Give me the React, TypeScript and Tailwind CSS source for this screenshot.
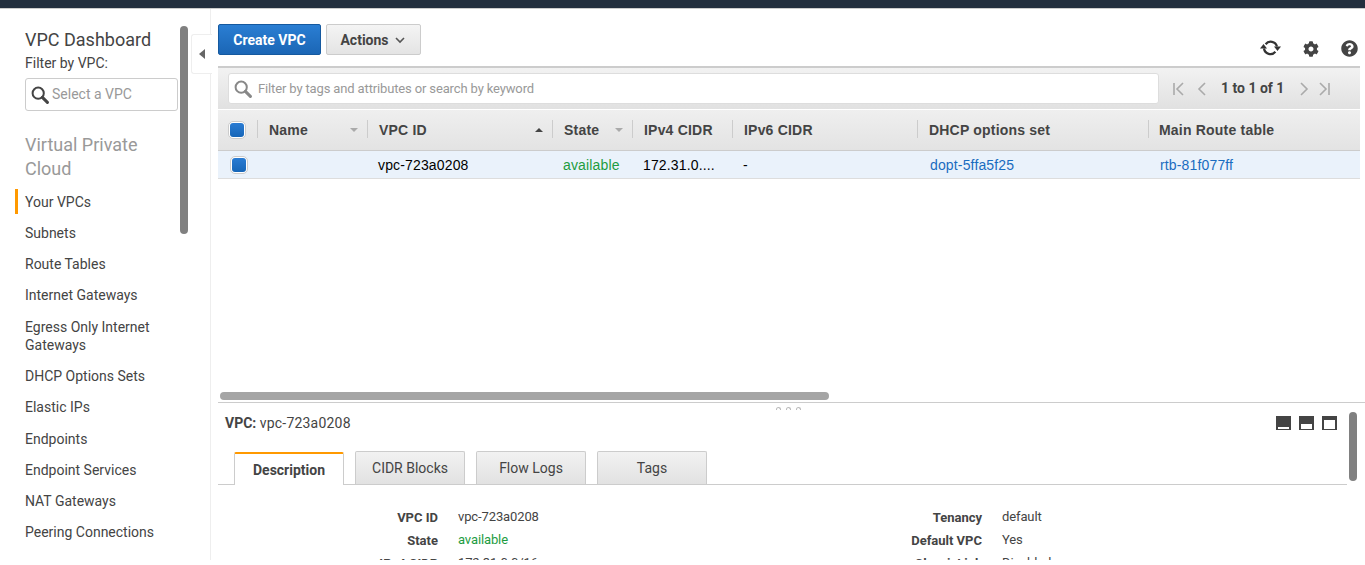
import { FaCog, FaQuestionCircle } from 'react-icons/fa';

const navItems = [
  { label: 'Your VPCs', active: true },
  { label: 'Subnets' },
  { label: 'Route Tables' },
  { label: 'Internet Gateways' },
  { label: 'Egress Only Internet Gateways' },
  { label: 'DHCP Options Sets' },
  { label: 'Elastic IPs' },
  { label: 'Endpoints' },
  { label: 'Endpoint Services' },
  { label: 'NAT Gateways' },
  { label: 'Peering Connections' },
];

const columns = [
  { label: 'Name', width: 'w-[110px]', sort: 'none', pad: 'pl-[12px]' },
  { label: 'VPC ID', width: 'w-[185px]', sort: 'up', pad: 'pl-[12px]' },
  { label: 'State', width: 'w-[80px]', sort: 'none', pad: 'pl-[12px]' },
  { label: 'IPv4 CIDR', width: 'w-[100px]', pad: 'pl-[12px]' },
  { label: 'IPv6 CIDR', width: 'w-[185px]', pad: 'pl-[12px]' },
  { label: 'DHCP options set', width: 'w-[231px]', pad: 'pl-[12px]' },
  { label: 'Main Route table', width: 'w-[212px]', pad: 'pl-[11px]' },
];

const tabs = ['CIDR Blocks', 'Flow Logs', 'Tags'];

function SearchIcon({ className }: { className: string }) {
  return (
    <svg width="18" height="18" viewBox="0 0 18 18" fill="none" stroke="currentColor" className={className} aria-hidden="true">
      <circle cx="7.2" cy="7.2" r="5.6" strokeWidth="2" />
      <path d="M11.4 11.4 16.4 16.4" strokeWidth="3" strokeLinecap="round" />
    </svg>
  );
}

function Checkbox() {
  return (
    <span className="flex h-[18px] w-[18px] items-center justify-center rounded-[5px] border border-[#ccc] bg-white">
      <span className="h-[14px] w-[14px] rounded-[3px] bg-gradient-to-b from-[#2a7cd3] to-[#1666b8]" />
    </span>
  );
}

function RefreshIcon() {
  return (
    <svg width="21" height="17" viewBox="0 0 21 17" fill="none" className="text-[#333]" aria-hidden="true">
      <path d="M5.6 4.2A6.5 6.5 0 0 1 17 6.5" stroke="currentColor" strokeWidth="2.2" />
      <path d="M15.4 11.8A6.5 6.5 0 0 1 4 8.5" stroke="currentColor" strokeWidth="2.2" />
      <path d="M14 6.5H21L17.5 11Z" fill="currentColor" />
      <path d="M0 8.5H7L3.5 4Z" fill="currentColor" />
    </svg>
  );
}

function PageIcon({ d }: { d: string }) {
  return (
    <svg width="12" height="14" viewBox="0 0 12 14" fill="none" stroke="#aaa" strokeWidth="1.6" aria-hidden="true">
      <path d={d} />
    </svg>
  );
}

function PaneIcon({ bar }: { bar: string }) {
  return (
    <span className="flex h-[14px] w-[15px] flex-col justify-end bg-[#444] px-[2px] pb-[1px]">
      <span className={`w-full bg-white ${bar}`} />
    </span>
  );
}

function DetailRow({ label, value, green }: { label: string; value: string; green?: boolean }) {
  return (
    <div className="flex h-[23px] items-center">
      <span className="w-full pt-[1px] text-right text-[13px] font-bold text-[#444]">{label}</span>
      <span className={`ml-[20px] w-[200px] shrink-0 pb-[2px] text-[13px] tracking-[-0.12px] ${green ? 'text-[#1d9c3f]' : 'text-[#444]'}`}>{value}</span>
    </div>
  );
}

export default function App() {
  return (
    <div className="h-[565px] w-[1365px] overflow-hidden bg-white font-['Roboto',sans-serif] text-[#444]">
      <div className="h-[9px] border-b border-[#ccc] bg-[#232f3e]" />

      <div className="relative flex h-[551px] overflow-hidden">
        {/* left nav */}
        <aside className="relative h-full w-[211px] shrink-0 border-r border-[#eee] pt-[18px]">
          <h2 className="ml-[25px] text-[18px] leading-[26px] text-[#444]">VPC Dashboard</h2>
          <div className="ml-[25px] text-[14px] leading-[20px]">Filter by VPC:</div>
          <div className="ml-[25px] mt-[5px] flex h-[33px] w-[153px] items-center rounded-[3px] border border-[#ccc] pl-[5px]">
            <SearchIcon className="shrink-0 text-[#444]" />
            <span className="ml-[3px] text-[14px] text-[#999]">Select a VPC</span>
          </div>
          <div className="ml-[25px] mt-[22px] w-[130px] text-[18px] leading-[24px] text-[#999]">Virtual Private Cloud</div>
          <nav className="mt-[5px]">
            {navItems.map((item) => (
              <div key={item.label} className="relative">
                {item.active && <span className="absolute left-[15px] top-[3px] h-[25px] w-[3px] bg-[#f90]" />}
                <div className="w-[160px] py-[6.65px] pl-[25px] text-[14px] leading-[18px] text-[#444]">{item.label}</div>
              </div>
            ))}
          </nav>
          <div className="absolute left-[180px] top-[17px] h-[208px] w-[8px] rounded-[4px] bg-[#808080]" />
        </aside>

        <button className="absolute left-[191px] top-[25px] flex h-[40px] w-[21px] items-center justify-center rounded-l-[3px] border border-r-0 border-[#eee] bg-white">
          <span className="border-y-[5px] border-r-[6px] border-y-transparent border-r-[#666]" />
        </button>

        {/* main */}
        <main className="relative ml-[7px] min-w-0 flex-1">
          <div className="flex h-[57px] items-start pt-[15px]">
            <button className="h-[31px] w-[103px] rounded-[2px] border border-[#15599f] bg-gradient-to-b from-[#2a7ed3] to-[#1b66b5] pt-[1px] text-[14px] font-bold text-white">
              Create VPC
            </button>
            <button className="ml-[5px] flex h-[31px] w-[95px] items-center justify-center rounded-[2px] border border-[#ccc] bg-gradient-to-b from-[#f4f4f4] to-[#e4e4e4] pr-[2px] pt-[1px] text-[14px] font-bold text-[#444]">
              Actions
              <svg width="10" height="7" viewBox="0 0 10 7" fill="none" stroke="#555" strokeWidth="1.6" className="ml-[6px]" aria-hidden="true">
                <path d="M1 1 5 5 9 1" />
              </svg>
            </button>
            <div className="ml-auto mr-[7px] mt-[16px] flex items-center">
              <RefreshIcon />
              <FaCog className="ml-[22px] text-[16px] text-[#444]" />
              <FaQuestionCircle className="ml-[22px] text-[17px] text-[#444]" />
            </div>
          </div>

          <div className="flex h-[43px] w-[1142px] items-center border-t-2 border-[#ccc] bg-gradient-to-b from-[#f2f2f2] to-[#e1e1e1] pl-[10px]">
            <div className="flex h-[31px] w-[931px] items-center rounded-[3px] border border-[#ddd] bg-white pl-[5px]">
              <SearchIcon className="shrink-0 text-[#888]" />
              <span className="ml-[6px] text-[13px] tracking-[-0.14px] text-[#999]">Filter by tags and attributes or search by keyword</span>
            </div>
            <div className="ml-[13px] flex items-center">
              <PageIcon d="M2 1V13M11 1 5 7 11 13" />
              <span className="ml-[12px]"><PageIcon d="M9 1 3 7 9 13" /></span>
              <span className="ml-[13px] mr-[14px] text-[14px] font-bold text-[#444]">1 to 1 of 1</span>
              <PageIcon d="M3 1 9 7 3 13" />
              <span className="ml-[9px]"><PageIcon d="M1 1 7 7 1 13M10 1V13" /></span>
            </div>
          </div>

          {/* table */}
          <div className="flex h-[42px] w-[1142px] items-center border-y border-[#ccc] border-t-white bg-gradient-to-b from-[#efefef] to-[#e3e3e3] font-['Liberation_Sans',sans-serif]">
            <div className="flex w-[39px] justify-center pr-[1px]"><Checkbox /></div>
            {columns.map((col) => (
              <div key={col.label} className={`relative flex h-[16px] shrink-0 items-center ${col.width} ${col.pad}`}>
                <span className="absolute left-0 top-[-2px] h-[18px] w-px bg-[#ccc]" />
                <span className="text-[14px] font-bold tracking-[0.2px] text-[#444]">{col.label}</span>
                {col.sort === 'none' && <span className="absolute right-[9px] top-[6px] border-x-[4px] border-t-[4px] border-x-transparent border-t-[#aaa]" />}
                {col.sort === 'up' && <span className="absolute right-[9px] top-[6px] border-x-[4px] border-b-[4px] border-x-transparent border-b-[#444]" />}
              </div>
            ))}
          </div>
          <div className="flex h-[28px] w-[1142px] items-center border-b border-[#ddd] bg-[#eaf2fb] pt-[1px] font-['Liberation_Sans',sans-serif] text-[14px] tracking-[0.15px]">
            <div className="-mt-[1px] flex w-[42px] shrink-0 justify-center"><Checkbox /></div>
            <div className="w-[118px] shrink-0" />
            <div className="w-[185px] shrink-0 text-black">vpc-723a0208</div>
            <div className="w-[80px] shrink-0 text-[#1d9c3f]">available</div>
            <div className="w-[100px] shrink-0 text-black">172.31.0....</div>
            <div className="w-[187px] shrink-0 text-black">-</div>
            <div className="w-[230px] shrink-0 text-[#1a6cc0]">dopt-5ffa5f25</div>
            <div className="text-[#1a6cc0]">rtb-81f077ff</div>
          </div>

          {/* horizontal scroll track */}
          <div className="flex h-[223px] items-end pb-[2px] pl-[2px]">
            <div className="h-[8px] w-[609px] rounded-[4px] bg-[#a5a5a5]" />
          </div>

          {/* detail pane */}
          <div className="border-t border-[#ccc]">
            <div className="flex h-[49px] items-start pl-[7px] pr-[28px] pt-[10px]">
              <div className="text-[14px] leading-[20px]"><b className="font-bold">VPC:</b> <span className="tracking-[0.2px]">vpc-723a0208</span></div>
              <div className="ml-auto mt-[3px] flex gap-[8px]">
                <PaneIcon bar="h-[2px]" />
                <PaneIcon bar="h-[5px]" />
                <PaneIcon bar="h-[9px]" />
              </div>
            </div>
            <div className="flex h-[33px] w-[1129px] items-end border-b border-[#ccc] pl-[16px]">
              <div className="-mb-px flex h-[33px] w-[110px] items-center justify-center rounded-t-[2px] border border-b-0 border-[#ccc] border-t-2 border-t-[#f90] bg-white pt-[2px] text-[14px] font-bold text-[#444]">
                Description
              </div>
              {tabs.map((tab) => (
                <div key={tab} className="ml-[11px] flex h-[33px] w-[110px] items-center justify-center rounded-t-[2px] border border-b-0 border-[#ccc] bg-gradient-to-b from-[#f2f2f2] to-[#e2e2e2] pt-[1px] text-[14px] text-[#444]">
                  {tab}
                </div>
              ))}
            </div>
            <div className="mt-[21px] grid w-[1129px] grid-cols-[440px_544px]">
              <div>
                <DetailRow label="VPC ID" value="vpc-723a0208" />
                <DetailRow label="State" value="available" green />
                <DetailRow label="IPv4 CIDR" value="172.31.0.0/16" />
              </div>
              <div>
                <DetailRow label="Tenancy" value="default" />
                <DetailRow label="Default VPC" value="Yes" />
                <DetailRow label="ClassicLink" value="Disabled" />
              </div>
            </div>
          </div>

          <div className="absolute left-[558px] top-[398px] flex gap-[5px]">
            <span className="h-[3px] w-[5px] rounded-t-[3px] border border-b-0 border-[#bbb]" />
            <span className="h-[3px] w-[5px] rounded-t-[3px] border border-b-0 border-[#bbb]" />
            <span className="h-[3px] w-[5px] rounded-t-[3px] border border-b-0 border-[#bbb]" />
          </div>
          <div className="absolute left-[1131px] top-[403px] h-[69px] w-[8px] rounded-[4px] bg-[#808080]" />
        </main>
      </div>
    </div>
  );
}
